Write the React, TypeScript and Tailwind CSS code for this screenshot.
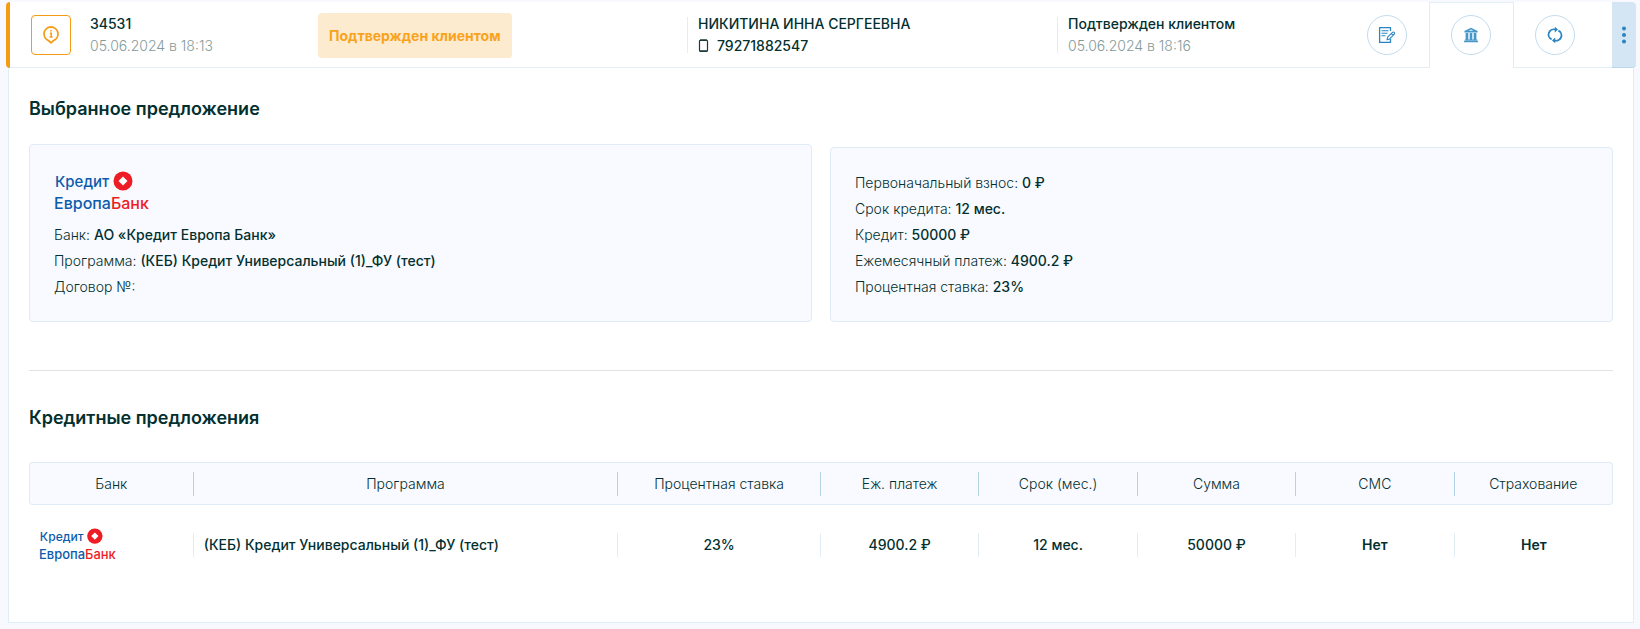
import type { ReactNode } from "react";

const columns = [
  { title: "Банк", width: "w-[10.4%]" },
  { title: "Программа", width: "w-[26.8%]" },
  { title: "Процентная ставка", width: "w-[12.8%]" },
  { title: "Еж. платеж", width: "w-[10%]" },
  { title: "Срок (мес.)", width: "w-[10%]" },
  { title: "Сумма", width: "w-[10%]" },
  { title: "СМС", width: "w-[10%]" },
  { title: "Страхование", width: "w-[10%]" },
];

const values = ["23%", "4900.2 ₽", "12 мес.", "50000 ₽", "Нет", "Нет"];

function BankLogo({ className }: { className: string }) {
  return (
    <svg
      viewBox="0 0 98 42"
      className={className}
      role="img"
      aria-label="Кредит Европа Банк"
      fontFamily="Inter, sans-serif"
      fontWeight="500"
    >
      <text x="1" y="16" fontSize="15" fill="#0d5cab">
        Кредит
      </text>
      <circle cx="69" cy="10" r="9.5" fill="#ee1c25" />
      <path d="M69 5.5 73.5 10 69 14.5 64.5 10Z" fill="#fff" />
      <text x="0" y="38" fontSize="16" fill="#0d5cab">
        Европа<tspan fill="#ee1c25">Банк</tspan>
      </text>
    </svg>
  );
}

function InfoPinIcon() {
  return (
    <svg width="18" height="20" viewBox="0 0 18 20" fill="none">
      <path
        d="M9 2a7 7 0 0 1 2.6 13.5L9 17.8l-2.6-2.3A7 7 0 0 1 9 2Z"
        stroke="#f59c14"
        strokeWidth="1.8"
        strokeLinejoin="round"
      />
      <path d="M9 5v1.6M8 8.2h1.2v3.6M7.6 12h3" stroke="#f59c14" strokeWidth="1.5" />
    </svg>
  );
}

function PhoneIcon() {
  return (
    <svg width="11" height="14" viewBox="0 0 11 14" fill="none">
      <rect x="1.5" y="1" width="8" height="11.5" rx="1.3" stroke="#1b3a3a" strokeWidth="1.2" />
      <path d="M2 1.2h7M2 12h7" stroke="#1b3a3a" strokeWidth="1.4" />
    </svg>
  );
}

function NoteIcon() {
  return (
    <svg width="18" height="18" viewBox="0 0 18 18" fill="none" stroke="#2a84c2">
      <path d="M12.5 5V1.6H1.6v14.8h10.9V13" strokeWidth="1.3" strokeLinejoin="round" />
      <path d="M3.5 4.7h7M3.5 7.2h6M3.5 9.7h4" strokeWidth="1.1" />
      <path
        d="m9 13.8.8-2.9 4.7-4.5c1.2-1 2.8.5 1.8 1.8l-4.6 4.7L9 13.8ZM13.4 7.6l1.8 1.8"
        strokeWidth="1.1"
        strokeLinejoin="round"
      />
    </svg>
  );
}

function BankIcon() {
  return (
    <svg width="16" height="16" viewBox="0 0 16 16" fill="#4797ca">
      <path
        fillRule="evenodd"
        d="M8 .8 14.6 4v1.6H1.4V4L8 .8Zm0 1.7-2.3 1.3h4.6L8 2.5Z"
      />
      <path d="M2.6 6h2.7v6.4H2.6zM6.7 6h2.6v6.4H6.7zM10.7 6h2.7v6.4h-2.7zM1.9 12.4h12.2v1.2H1.9zM1 13.8h14v1.5H1z" />
    </svg>
  );
}

function RefreshIcon() {
  return (
    <svg width="16" height="18" viewBox="0 0 16 18" fill="none">
      <path
        d="M4.6 13.4A5.3 5.3 0 0 1 8.6 3.6M11.4 4.6A5.3 5.3 0 0 1 7.4 14.4"
        stroke="#2a84c2"
        strokeWidth="1.8"
      />
      <path d="M7.8.8v5.6L11 3.6 7.8.8ZM8.2 17.2v-5.6L5 14.4l3.2 2.8Z" fill="#2a84c2" />
    </svg>
  );
}

function RoundButton({ label, children }: { label: string; children: ReactNode }) {
  return (
    <button
      type="button"
      aria-label={label}
      className="flex size-10 items-center justify-center rounded-full border border-[#c2dcee] bg-white"
    >
      {children}
    </button>
  );
}

function Detail({ label, value }: { label: string; value?: string }) {
  return (
    <p className="leading-[26px] font-light">
      {label}: {value && <span className="font-medium">{value}</span>}
    </p>
  );
}

function Header() {
  return (
    <header className="flex h-[66px] rounded-l-sm border-l-4 border-[#f59c14] bg-white">
      <div className="grid flex-1 grid-cols-[307fr_370fr_370fr_288fr] items-center border-b border-b-[#e1eef6]">
        <div className="flex items-center gap-[19px] pl-[21px]">
          <div className="flex size-10 items-center justify-center rounded-sm border border-[#f59c14]">
            <InfoPinIcon />
          </div>
          <div className="leading-[22px]">
            <p className="font-medium">34531</p>
            <p className="font-light text-[#859a99]">05.06.2024 в 18:13</p>
          </div>
        </div>
        <div className="flex pt-px pl-px">
          <span className="rounded-sm bg-[#fdebd0] px-[11px] leading-[45px] font-bold text-[#f8a31b]">
            Подтвержден клиентом
          </span>
        </div>
        <div className="flex h-9 flex-col justify-center border-l border-[#e1eef6] pl-2.5 leading-[22px] font-medium">
          <p>НИКИТИНА ИННА СЕРГЕЕВНА</p>
          <p className="flex items-center gap-2">
            <PhoneIcon />
            79271882547
          </p>
        </div>
        <div className="flex h-9 flex-col justify-center border-l border-[#e1eef6] pl-2.5 leading-[22px]">
          <p className="font-medium">Подтвержден клиентом</p>
          <p className="font-light text-[#859a99]">05.06.2024 в 18:16</p>
        </div>
      </div>
      <div className="flex w-[84px] items-center justify-center border-b border-b-[#e1eef6]">
        <RoundButton label="Анкета">
          <NoteIcon />
        </RoundButton>
      </div>
      <div className="flex w-[85px] items-center justify-center border-x border-t border-[#e1eef6] pr-px pb-0.5">
        <RoundButton label="Банки">
          <BankIcon />
        </RoundButton>
      </div>
      <div className="flex w-[98px] items-center border-b border-b-[#e1eef6] pl-[21px]">
        <RoundButton label="Обновить">
          <RefreshIcon />
        </RoundButton>
      </div>
      <button
        type="button"
        aria-label="Меню"
        className="flex w-6 items-center justify-center rounded-r-sm border-b border-b-[#b9d8ec] bg-[#d4e6f3]"
      >
        <svg width="4" height="18" viewBox="0 0 4 18" fill="#2a84c2">
          <circle cx="2" cy="2.5" r="2" />
          <circle cx="2" cy="9" r="2" />
          <circle cx="2" cy="15.5" r="2" />
        </svg>
      </button>
    </header>
  );
}

function OffersTable() {
  return (
    <table className="w-full table-fixed border-separate border-spacing-0">
      <thead>
        <tr>
          {columns.map(({ title, width }) => (
            <th
              key={title}
              className={`group border-y border-[#dfebf6] bg-[#f8faff] p-0 pt-[9px] pb-2 font-light first:rounded-l-sm first:border-l last:rounded-r-sm last:border-r ${width}`}
            >
              <div className="border-r border-[#b4d3e7] leading-6 group-last:border-r-0">{title}</div>
            </th>
          ))}
        </tr>
      </thead>
      <tbody>
        <tr className="h-20">
          <td className="p-0">
            <div className="flex h-6 items-center border-r border-[#e1eef6] pl-2.5">
              <BankLogo className="h-[34px]" />
            </div>
          </td>
          <td className="p-0">
            <div className="border-r border-[#e1eef6] pl-2.5 leading-6 font-medium">
              (КЕБ) Кредит Универсальный (1)_ФУ (тест)
            </div>
          </td>
          {values.map((value, i) => (
            <td key={i} className="group p-0 text-center">
              <div
                className={`border-r border-[#e1eef6] leading-6 group-last:border-r-0 ${value === "Нет" ? "font-semibold" : "font-medium"}`}
              >
                {value}
              </div>
            </td>
          ))}
        </tr>
      </tbody>
    </table>
  );
}

export default function App() {
  return (
    <div className="min-h-screen bg-[#f8f9fe] pt-0.5 pr-1 pb-1.5 pl-1.5 font-['Inter',sans-serif] text-sm text-[#03302f]">
      <Header />
      <main className="mx-0.5 border border-t-0 border-[#dfeff7] bg-white px-5 pt-[29px] pb-[37px]">
        <h2 className="text-lg leading-6 font-semibold">Выбранное предложение</h2>
        <div className="mt-[23px] grid grid-cols-2 items-end gap-[18px]">
          <section className="rounded-sm border border-[#dfebf6] bg-[#f8faff] px-6 pt-[22px] pb-[21px]">
            <BankLogo className="mt-1 mb-[9px] h-[42px]" />
            <Detail label="Банк" value="АО «Кредит Европа Банк»" />
            <Detail label="Программа" value="(КЕБ) Кредит Универсальный (1)_ФУ (тест)" />
            <Detail label="Договор №" />
          </section>
          <section className="rounded-sm border border-[#dfebf6] bg-[#f8faff] px-6 pt-[22px] pb-[21px]">
            <Detail label="Первоначальный взнос" value="0 ₽" />
            <Detail label="Срок кредита" value="12 мес." />
            <Detail label="Кредит" value="50000 ₽" />
            <Detail label="Ежемесячный платеж" value="4900.2 ₽" />
            <Detail label="Процентная ставка" value="23%" />
          </section>
        </div>
        <hr className="mt-12 mb-[35px] border-[#e1e4e5]" />
        <h2 className="mb-8 text-lg leading-6 font-semibold">Кредитные предложения</h2>
        <OffersTable />
      </main>
    </div>
  );
}
